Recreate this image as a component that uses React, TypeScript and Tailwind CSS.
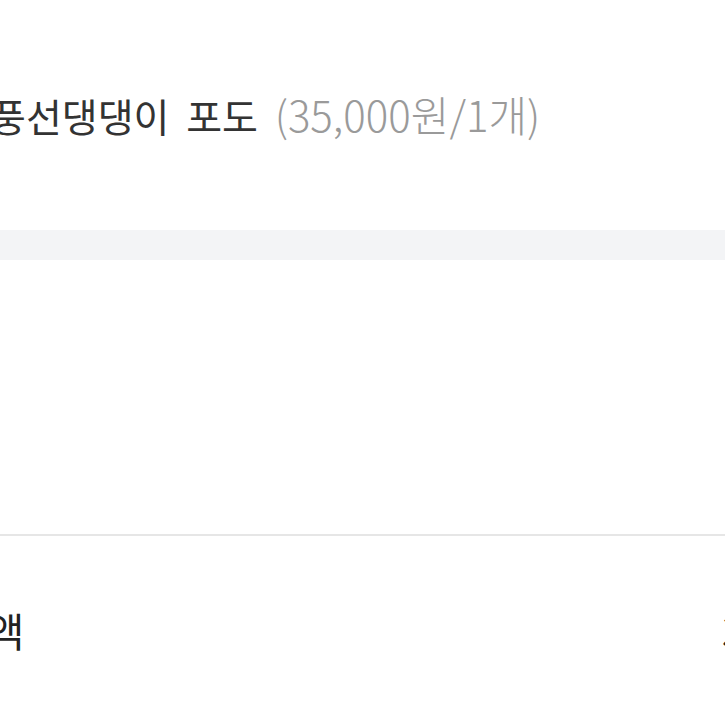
export default function App() {
  return (
    <div className="w-full h-[725px] overflow-hidden bg-white font-['Noto_Sans_CJK_KR','Noto_Sans',sans-serif]">
      <div className="h-[230px] pt-[92px]">
        <p className="-ml-[10px] whitespace-nowrap text-[39px] leading-[44px] text-[#333333] [word-spacing:8px]">
          풍선댕댕이 포도{' '}
          <span className="text-[42px] font-light text-[#9a9a9a] [word-spacing:0px]">(35,000원/1개)</span>
        </p>
      </div>
      <div className="h-[30px] bg-[#f3f4f6]" />
      <div className="h-[276px] border-b-2 border-[#e6e6e6]" />
      <div className="flex items-center justify-between pt-[72px]">
        <span className="-ml-[123px] whitespace-nowrap text-[40px] leading-[44px] text-[#222222]">결제금액</span>
        <span className="-mr-[156px] whitespace-nowrap text-[40px] leading-[44px] text-[#222222]">35,000원</span>
      </div>
    </div>
  );
}
